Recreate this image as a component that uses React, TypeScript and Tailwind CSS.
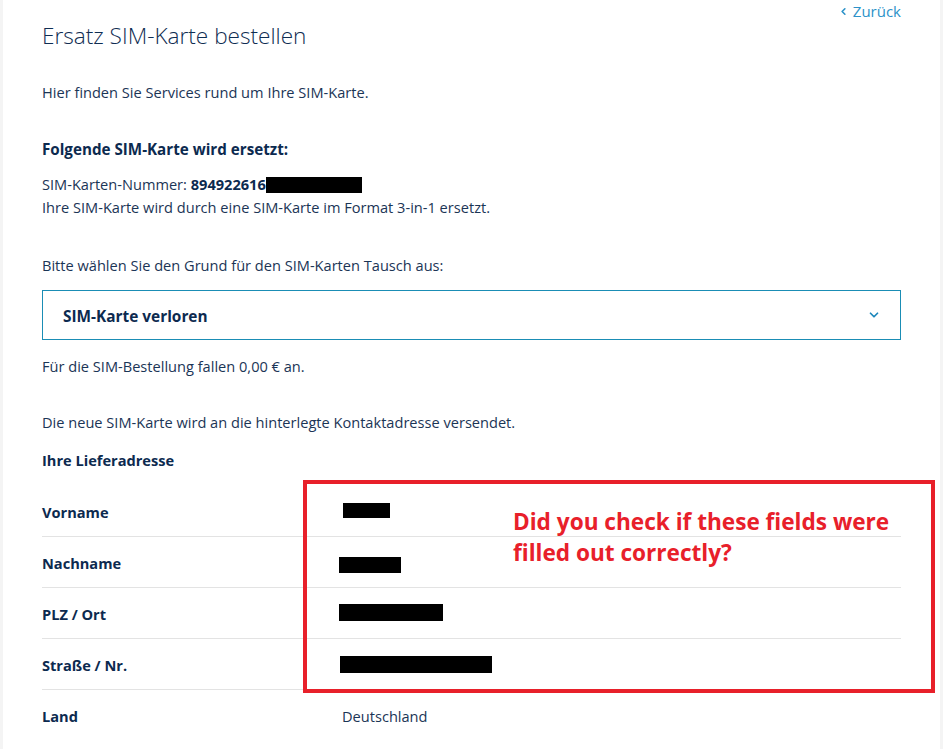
import { ChevronDown, ChevronLeft } from "lucide-react";

const rows = [
  { label: "Vorname", redact: "ml-px mt-[-1px] w-[47px] h-[15px]" },
  { label: "Nachname", redact: "ml-[-3px] mt-[6px] w-[62px] h-[16px]" },
  { label: "PLZ / Ort", redact: "ml-[-3px] mt-[-1px] w-[104px] h-[17px]" },
  { label: "Straße / Nr.", redact: "ml-[-2px] mt-[1px] w-[152px] h-[17px]" },
];

export default function App() {
  return (
    <div
      className="relative h-[749px] overflow-hidden bg-[#f4f4f4] px-[3px] text-[14.6px] text-[#1b3556]"
      style={{ fontFamily: '"Open Sans", "Noto Sans", sans-serif' }}
    >
      <div className="flex h-full flex-col bg-white px-[39px]">
        <a className="flex h-[22px] items-center gap-[4px] self-end text-[15px] text-[#2c92c9]">
          <ChevronLeft size={11} strokeWidth={3.5} />
          Zurück
        </a>
        <h1 className="text-[22.6px] font-light leading-[28px] text-[#0f2d52]">Ersatz SIM-Karte bestellen</h1>

        <p className="mt-[32px] leading-[20px]">Hier finden Sie Services rund um Ihre SIM-Karte.</p>

        <h2 className="mt-[37px] text-[15.2px] font-bold leading-[20px] text-[#0c2a4f]">Folgende SIM-Karte wird ersetzt:</h2>
        <div className="mt-[14px] leading-[23px]">
          <p className="flex items-center">
            SIM-Karten-Nummer:&nbsp;<span className="font-bold text-[#0c2a4f]">894922616</span>
            <span className="inline-block h-[16px] w-[96px] bg-black" />
          </p>
          <p>Ihre SIM-Karte wird durch eine SIM-Karte im Format 3-in-1 ersetzt.</p>
        </div>

        <p className="mt-[36px] leading-[20px]">Bitte wählen Sie den Grund für den SIM-Karten Tausch aus:</p>

        <div className="mt-[15px] flex h-[50px] items-center justify-between border border-[#1a8db5] pl-[20px] pr-[19px]">
          <span className="pt-[4px] text-[15.4px] font-bold text-[#0c2a4f]">SIM-Karte verloren</span>
          <ChevronDown size={14} strokeWidth={3} className="text-[#1d87bb]" />
        </div>

        <p className="mt-[16px] leading-[20px]">Für die SIM-Bestellung fallen 0,00 € an.</p>

        <p className="mt-[36px] leading-[20px]">Die neue SIM-Karte wird an die hinterlegte Kontaktadresse versendet.</p>

        <h2 className="mt-[18px] font-bold leading-[20px] text-[#0c2a4f]">Ihre Lieferadresse</h2>

        <div className="mt-[16px]">
          {rows.map((r) => (
            <div key={r.label} className="grid h-[51px] grid-cols-[300px_1fr] items-center border-b border-[#e3e3e3]">
              <span className="pt-[4px] font-bold text-[#0c2a4f]">{r.label}</span>
              <span className={`block bg-black ${r.redact}`} />
            </div>
          ))}
          <div className="grid h-[50px] grid-cols-[300px_1fr] items-center">
            <span className="pt-[4px] font-bold text-[#0c2a4f]">Land</span>
            <span className="pt-[4px]">Deutschland</span>
          </div>
        </div>
      </div>

      <div className="absolute left-[303px] top-[480px] h-[213px] w-[632px] border-[4px] border-[#e8202a] pl-[206px] pt-[22px]">
        <p className="text-[22.6px] font-bold leading-[31px] text-[#e8202a]">
          Did you check if these fields were
          <br />
          filled out correctly?
        </p>
      </div>
    </div>
  );
}
